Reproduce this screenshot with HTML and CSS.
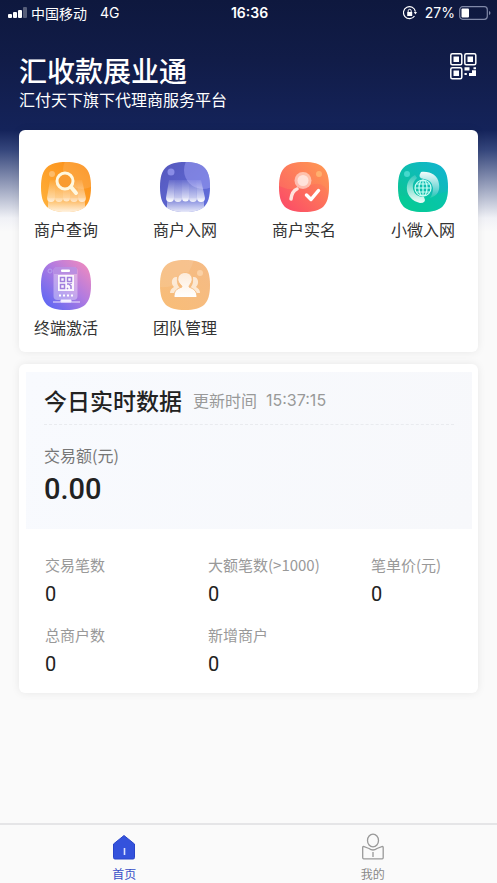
FILE: index.html
```html
<!DOCTYPE html>
<html lang="zh-CN">
<head>
<meta charset="utf-8">
<meta name="viewport" content="width=device-width, initial-scale=1">
<title>汇收款展业通</title>
<link rel="stylesheet" href="styles.css">
</head>
<body>
<div class="app">
  <div class="status">
    <div class="status-side">
      <svg width="20" height="12" viewBox="0 0 20 12" fill="#fff"><rect x="0" y="7" width="4" height="4" rx="1"/><rect x="5" y="5" width="4" height="6" rx="1"/><rect x="10" y="3" width="4" height="8" rx="1"/><rect x="15" y="0" width="4" height="11" rx="1" opacity=".3"/></svg>
      <span class="carrier">中国移动</span><span class="network">4G</span>
    </div>
    <span class="clock">16:36</span>
    <div class="status-side status-right">
      <svg width="14" height="14" viewBox="0 0 14 14" fill="none" stroke="#fff"><path d="M12.4 5.6A6 6 0 1 0 11.5 10" stroke-width="1.2"/><path d="M10.8 6h3.2l-1.6 2.4z" fill="#fff" stroke="none"/><rect x="4.2" y="6" width="5" height="4" fill="#fff" stroke="none"/><path d="M5.2 6V4.8a1.5 1.5 0 0 1 3 0V6"/></svg>
      <span>27%</span>
      <svg width="32" height="14" viewBox="0 0 32 14"><rect x=".7" y=".7" width="27.6" height="12.6" rx="3" fill="none" stroke="#8089a8" stroke-width="1.2"/><rect x="2.5" y="2.5" width="7.5" height="9" rx="1" fill="#fff"/><path d="M30 5v4q1.5-.6 1.5-2T30 5z" fill="#8089a8"/></svg>
    </div>
  </div>
  <header class="header">
    <div>
      <h1>汇收款展业通</h1>
      <p>汇付天下旗下代理商服务平台</p>
    </div>
    <button class="qr" aria-label="二维码">
      <svg width="27" height="27" viewBox="0 0 27 27"><g fill="none" stroke="#fff" stroke-width="1.5"><rect x=".8" y=".8" width="11" height="11" rx="1.5"/><rect x="14.8" y=".8" width="11" height="11" rx="1.5"/><rect x=".8" y="14.8" width="11" height="11" rx="1.5"/></g><path fill="#fff" d="M3.500 3.500H9V9H3.500zM17.500 3.500H23V9h-5.500zM3.500 17.500H9V23H3.500zM14.500 14.200h5v3.300h-5zM23.500 14.200h2.500v2h-2.500zM14.500 20h2.300v2h-2.300zM22 17.300h4V23h-7v-3h3z"/></svg>
    </button>
  </header>
  <main>
    <nav class="card menu" aria-label="功能">
      <a href="#query">
        <svg viewBox="0 0 50 50"><defs><linearGradient id="a" x1="0" y1="1" x2="1" y2="0"><stop stop-color="#ffb33e"/><stop offset="1" stop-color="#fb8a12"/></linearGradient><linearGradient id="w" x1="0" y1="0" x2="0" y2="1"><stop stop-color="#fff" stop-opacity=".08"/><stop offset=".8" stop-color="#fff" stop-opacity=".75"/><stop offset="1" stop-color="#fff"/></linearGradient><linearGradient id="v" x1="0" y1="0" x2="0" y2="1"><stop stop-color="#fff" stop-opacity=".15"/><stop offset="1" stop-color="#fff" stop-opacity=".85"/></linearGradient><path id="tile" d="M25 0C43 0 50 6 50 25S43 50 25 50 0 44 0 25 7 0 25 0Z"/><clipPath id="c"><use href="#tile"/></clipPath></defs><use href="#tile" fill="url(#a)"/><g clip-path="url(#c)"><circle cx="41" cy="8" r="19" fill="#fff" opacity=".12"/><circle cx="11" cy="12" r="3" fill="#fff" opacity=".3"/><rect x="7" y="36" width="37" height="14" fill="url(#v)"/></g><path fill="url(#w)" opacity=".7" d="M9 18h6l-1 18a4 4 0 0 1-8 0zM22 18h7v18a3.500 3.500 0 0 1-7 0zM36 18h5l4 18a4 4 0 0 1-8 0z"/><path fill="url(#w)" opacity=".6" d="M15 18h7v18a4 4 0 0 1-8 0zM29 18h7l1 18a4 4 0 0 1-8 0z"/><circle cx="24" cy="19" r="8" fill="#f99c31" stroke="#fff8df" stroke-width="3"/><path d="m30 25 5 6" stroke="#fff8df" stroke-width="4" stroke-linecap="round"/></svg>
        <span>商户查询</span></a>
      <a href="#join">
        <svg viewBox="0 0 50 50"><defs><linearGradient id="b" x1="0" y1="0" x2="1" y2="1"><stop stop-color="#5557bc"/><stop offset="1" stop-color="#6270de"/></linearGradient></defs><use href="#tile" fill="url(#b)"/><g clip-path="url(#c)"><circle cx="43" cy="8" r="19" fill="#9a9cf3" opacity=".55"/><circle cx="11" cy="10" r="3.500" fill="#898ce6"/><rect x="7" y="36" width="37" height="14" fill="url(#v)"/></g><path fill="url(#w)" d="M9 18h6l-1 18a4 4 0 0 1-8 0zM22 18h7v18a3.500 3.500 0 0 1-7 0zM36 18h5l4 18a4 4 0 0 1-8 0z"/><path fill="url(#w)" opacity=".85" d="M15 18h7v18a4 4 0 0 1-8 0zM29 18h7l1 18a4 4 0 0 1-8 0z"/></svg>
        <span>商户入网</span></a>
      <a href="#verify">
        <svg viewBox="0 0 50 50"><defs><linearGradient id="r" x1="0" y1="1" x2="1" y2="0"><stop stop-color="#fb4669"/><stop offset="1" stop-color="#ff9650"/></linearGradient></defs><use href="#tile" fill="url(#r)"/><g clip-path="url(#c)"><path d="M0 24q15 7 30 0t20 9V0H0z" fill="#ffb05a" opacity=".2"/></g><circle cx="40" cy="12" r="3" fill="#ffb06e"/><circle cx="24" cy="18.500" r="8.500" fill="#fff" opacity=".5"/><circle cx="24" cy="18.500" r="5.500" fill="#fff" opacity=".55"/><path d="M18 27q-5 2-6 10" fill="none" stroke="#ffe3dc" stroke-width="3.500" stroke-linecap="round"/><path d="m27.500 33 4.500 4.500 7.500-9" fill="none" stroke="#fff" stroke-width="3.500" stroke-linecap="round" stroke-linejoin="round"/></svg>
        <span>商户实名</span></a>
      <a href="#micro">
        <svg viewBox="0 0 50 50"><defs><linearGradient id="g" x1="0" y1="1" x2="1" y2="0"><stop stop-color="#09c98a"/><stop offset="1" stop-color="#12b3d3"/></linearGradient><linearGradient id="s" x1="0" y1="0" x2="0" y2="1"><stop stop-color="#fff" stop-opacity=".15"/><stop offset="1" stop-color="#fff" stop-opacity=".95"/></linearGradient><linearGradient id="t" x1="0" y1="1" x2="0" y2="0"><stop stop-color="#fff" stop-opacity=".1"/><stop offset="1" stop-color="#fff" stop-opacity=".95"/></linearGradient></defs><use href="#tile" fill="url(#g)"/><g clip-path="url(#c)"><path d="M0 33Q25 38 50 29V50H0z" fill="#00d39b" opacity=".4"/></g><circle cx="9" cy="12" r="3" fill="#45d9cd"/><path d="M17 13C5 19 6 37 22 41q7 0 4-6-9 0-11-8-1-7 4-11z" fill="url(#s)"/><path d="M23 10q-4 6 3 7 8 1 9 9 0 6-3 10c8-2 10-8 9-14-1-9-9-13-18-12z" fill="url(#t)"/><g fill="none" stroke="#ccfff5" stroke-width="1.200"><circle cx="25" cy="26" r="8"/><ellipse cx="25" cy="26" rx="4" ry="8"/><path d="M25 18v16M17 26h16M18.500 22h13M18.500 30h13"/></g></svg>
        <span>小微入网</span></a>
      <a href="#terminal">
        <svg viewBox="0 0 50 50"><defs><linearGradient id="p" x1="0" y1="1" x2="1" y2="0"><stop offset=".1" stop-color="#6168f3"/><stop offset=".55" stop-color="#b27be0"/><stop offset="1" stop-color="#f98db9"/></linearGradient></defs><use href="#tile" fill="url(#p)"/><circle cx="9" cy="11" r="2" fill="none" stroke="#b4a0ee"/><rect x="12.500" y="7" width="24" height="33" rx="4" fill="#fff" opacity=".35"/><path d="M13 9q0-2 3-2h17q3 0 3 2v5H13z" fill="#ac82df" opacity=".7"/><rect x="20" y="9.500" width="9" height="2.500" rx="1" fill="#fff"/><rect x="17" y="15" width="16" height="16" fill="#fff" opacity=".9"/><g fill="none" stroke="#a07ddc" stroke-width="1.500"><path d="M19.500 17.500h4v4h-4zM26.500 17.500h4v4h-4zM19.500 24.500h4v4h-4zM26 24h2l2 2v3m-4-1 1 1m3-5v-1"/></g><path d="M18 35.500h14" stroke="#fff" stroke-width="2" stroke-dasharray="2"/><path d="M20 40h10v2H20zM12 42h27" fill="#fff" stroke="#efe6ff" stroke-width="1"/></svg>
        <span>终端激活</span></a>
      <a href="#team">
        <svg viewBox="0 0 50 50"><defs><linearGradient id="o" x1="0" y1="1" x2="1" y2="0"><stop stop-color="#f8bd77"/><stop offset="1" stop-color="#f5bb86"/></linearGradient><linearGradient id="wt" x1="0" y1="0" x2="0" y2="1"><stop stop-color="#fdebd9"/><stop offset="1" stop-color="#fff"/></linearGradient></defs><use href="#tile" fill="url(#o)"/><g clip-path="url(#c)"><path d="M0 27Q25 29 34 0H0z" fill="#fff" opacity=".1"/></g><circle cx="40" cy="13" r="3" fill="#fbd1a5"/><g fill="#fff" opacity=".65"><path d="M17 17c-5-1-7 6-3 10q-4 2-4 6h5l5-5c-4-4-3-8-3-11M33 17c5-1 7 6 3 10q4 2 4 6h-5l-5-5c4-4 3-8 3-11"/></g><path fill="url(#wt)" stroke="#f6bc80" d="M25 12.500c5 0 8 4 7 8.500-1 3-3 4-3 6 5 2 8 4 8 10.500H14c0-6.500 2-8.500 8-10.500 0-2-3-3-4-6-1-4.500 2-8.500 7-8.500Z"/></svg>
        <span>团队管理</span></a>
    </nav>
    <section class="card data">
      <div class="today">
        <div class="today-head"><h2>今日实时数据</h2><span>更新时间</span><time>15:37:15</time></div>
        <p class="amount-label">交易额(元)</p>
        <p class="amount">0.00</p>
      </div>
      <dl class="stats">
        <div><dt>交易笔数</dt><dd>0</dd></div>
        <div><dt>大额笔数(&gt;1000)</dt><dd>0</dd></div>
        <div><dt>笔单价(元)</dt><dd>0</dd></div>
        <div><dt>总商户数</dt><dd>0</dd></div>
        <div><dt>新增商户</dt><dd>0</dd></div>
      </dl>
    </section>
  </main>
  <nav class="tabs" aria-label="主导航">
    <a class="active" href="#home"><svg width="24" height="28" viewBox="0 0 24 28"><path d="M12 2.500 22.500 11v13.500q0 1.500-1.500 1.500H3q-1.500 0-1.500-1.500V11z" fill="#3452dc" stroke="#2945c9"/><path d="M12.500 15v7" stroke="#dce3ff" stroke-width="1.600"/></svg><span>首页</span></a>
    <a href="#me"><svg width="24" height="28" viewBox="0 0 24 28" fill="none" stroke="#999" stroke-width="1.300"><ellipse cx="12" cy="7.500" rx="5.500" ry="6.300"/><path d="M8 15.500 2.500 13.500q-.8 0-.8 1v10q0 1.300 1 1.300h18.500q1 0 1-1.300v-10q0-1-.8-1L16 15.500q-4 3-8 0zM12 19v5"/></svg><span>我的</span></a>
  </nav>
</div>
</body>
</html>
```
FILE: styles.css
```css
* { box-sizing: border-box; }
body, h1, h2, p, dl, dd { margin: 0; }
body {
  font-family: "Noto Sans CJK SC", sans-serif;
  color: #222;
  background: #fafafa;
}
a { color: inherit; text-decoration: none; }
svg { display: block; }
.app {
  min-height: 100vh;
  display: flex;
  flex-direction: column;
  background: linear-gradient(#0e183e 0, #111c48 60px, #14235a 130px, #35467c 150px, #f0f1f6 218px, #fafafa 232px);
}
.status {
  display: flex;
  align-items: center;
  height: 26px;
  padding: 0 6px 0 8px;
  color: #fff;
  font-size: 14px;
  line-height: 20px;
}
.status-side { flex: 1; display: flex; align-items: center; gap: 3px; }
.status-right { justify-content: flex-end; gap: 4px; }
.status-right, .network { font-family: Inter, sans-serif; }
.status-right span { margin-left: 4px; }
.carrier { margin-right: 10px; }
.clock { font: 600 14px/20px Inter, sans-serif; }
.header {
  display: flex;
  justify-content: space-between;
  align-items: flex-start;
  height: 104px;
  padding: 27px 20px 0 19px;
  color: #fff;
}
h1 { font-size: 28px; line-height: 34px; font-weight: 500; }
.header p { font-size: 16px; line-height: 24px; }
.qr { padding: 0; border: 0; background: none; }
main { flex: 1; display: grid; align-content: start; gap: 12px; padding: 0 19px; }
.card { background: #fff; border-radius: 6px; box-shadow: 0 0 8px rgba(0, 0, 0, .08); }
.menu {
  display: grid;
  grid-template-columns: repeat(4, 68px);
  justify-content: space-between;
  row-gap: 19px;
  padding: 32px 21px 13px 13px;
}
.menu a { display: flex; flex-direction: column; align-items: center; gap: 5px; }
.menu svg { width: 50px; height: 50px; }
.menu span { font-size: 16px; line-height: 24px; color: #333; }
.data { padding: 8px 6px 4px 7px; }
.today { padding: 10px 18px 20px; background: linear-gradient(110deg, #f8fafe, #f7f8fb); }
.today-head {
  display: flex;
  align-items: center;
  height: 43px;
  padding-bottom: 6px;
  border-bottom: 1px dashed #e9ebef;
  color: #999;
  font-size: 16px;
}
h2 { margin-right: 11px; font-size: 23px; line-height: 34px; font-weight: 500; color: #222; }
time { margin-left: 9px; font: 16px/24px Inter, sans-serif; }
.amount-label { margin-top: 18px; font-size: 16px; line-height: 24px; color: #777; }
.amount { margin-top: 2px; font: 500 29px/40px Roboto, sans-serif; }
.stats {
  display: grid;
  grid-template-columns: 163px 163px 1fr;
  row-gap: 4px;
  padding: 24px 0 0 19px;
}
dt { font-size: 15px; line-height: 24px; color: #999; white-space: nowrap; }
dd { height: 42px; font: 20px/34px Roboto, sans-serif; }
.tabs {
  display: grid;
  grid-template-columns: 1fr 1fr;
  height: 60px;
  border-top: 2px solid #e5e5e7;
  background: #fafafa;
  color: #888;
}
.tabs a { display: flex; flex-direction: column; align-items: center; padding-top: 8px; }
.tabs span { margin-top: 4px; font-size: 12px; line-height: 18px; }
.tabs .active { color: #3850c8; }
```
